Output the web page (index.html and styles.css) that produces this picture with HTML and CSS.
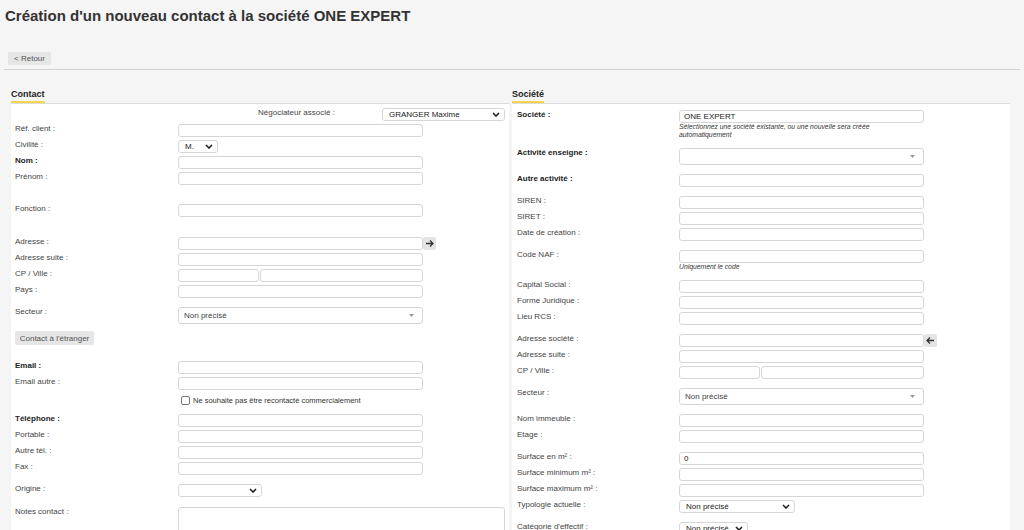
FILE: index.html
```html
<!DOCTYPE html>
<html lang="fr">
<head>
    <meta charset="UTF-8">
    <meta name="viewport" content="width=device-width, initial-scale=1.0">
    <title>Nouveau contact</title>
    <link rel="stylesheet" href="styles.css">
</head>
<body>
    <h1 class="page-title">Création d'un nouveau contact à la société ONE EXPERT</h1>
    <div class="toolbar">
        <button class="btn btn-back">&lt; Retour</button>
    </div>

    <div class="columns">
        <!-- Contact -->
        <div class="column">
            <h2 class="section-title"><span>Contact</span></h2>
            <div class="panel">
                <div class="row">
                    <div class="nego-label">Négociateur associé :</div>
                    <div class="select-wrap w-nego">
                        <select><option>GRANGER Maxime</option></select>
                        <svg class="chevron" width="8" height="5" viewBox="0 0 8 5"><path d="M1 1 L4 4 L7 1" /></svg>
                    </div>
                </div>
                <div class="row">
                    <label class="label">Réf. client :</label>
                    <input type="text" class="input">
                </div>
                <div class="row">
                    <label class="label">Civilité :</label>
                    <div class="select-wrap w-civ">
                        <select><option>M.</option></select>
                        <svg class="chevron" width="8" height="5" viewBox="0 0 8 5"><path d="M1 1 L4 4 L7 1" /></svg>
                    </div>
                </div>
                <div class="row">
                    <label class="label strong">Nom :</label>
                    <input type="text" class="input">
                </div>
                <div class="row">
                    <label class="label">Prénom :</label>
                    <input type="text" class="input">
                </div>
                <div class="row sep-lg">
                    <label class="label">Fonction :</label>
                    <input type="text" class="input">
                </div>
                <div class="row sep-xl">
                    <label class="label">Adresse :</label>
                    <input type="text" class="input">
                    <button class="addr-btn">
                        <svg width="9" height="9" viewBox="0 0 9 9"><path d="M1 4.5 H8 M5 1.5 L8 4.5 L5 7.5" /></svg>
                    </button>
                </div>
                <div class="row">
                    <label class="label">Adresse suite :</label>
                    <input type="text" class="input">
                </div>
                <div class="row">
                    <label class="label">CP / Ville :</label>
                    <div class="cp-ville">
                        <input type="text" class="input input-cp">
                        <input type="text" class="input input-ville">
                    </div>
                </div>
                <div class="row">
                    <label class="label">Pays :</label>
                    <input type="text" class="input">
                </div>
                <div class="row sep">
                    <label class="label">Secteur :</label>
                    <div class="select2">
                        <span>Non précisé</span>
                        <svg width="5" height="3" viewBox="0 0 5 3"><polygon points="0,0 5,0 2.5,3" /></svg>
                    </div>
                </div>
                <div class="row">
                    <button class="btn btn-foreign">Contact à l'étranger</button>
                </div>
                <div class="row sep-md">
                    <label class="label strong">Email :</label>
                    <input type="text" class="input">
                </div>
                <div class="row">
                    <label class="label">Email autre :</label>
                    <input type="text" class="input">
                </div>
                <div class="check-row">
                    <span class="checkbox"></span>
                    <span>Ne souhaite pas être recontacté commercialement</span>
                </div>
                <div class="row">
                    <label class="label strong">Téléphone :</label>
                    <input type="text" class="input">
                </div>
                <div class="row">
                    <label class="label">Portable :</label>
                    <input type="text" class="input">
                </div>
                <div class="row">
                    <label class="label">Autre tél. :</label>
                    <input type="text" class="input">
                </div>
                <div class="row">
                    <label class="label">Fax :</label>
                    <input type="text" class="input">
                </div>
                <div class="row sep">
                    <label class="label">Origine :</label>
                    <div class="select-wrap w-origine">
                        <select><option></option></select>
                        <svg class="chevron" width="8" height="5" viewBox="0 0 8 5"><path d="M1 1 L4 4 L7 1" /></svg>
                    </div>
                </div>
                <div class="row sep-notes">
                    <label class="label">Notes contact :</label>
                    <textarea class="notes"></textarea>
                </div>
            </div>
        </div>

        <!-- Société -->
        <div class="column">
            <h2 class="section-title"><span>Société</span></h2>
            <div class="panel panel-societe">
                <div class="row">
                    <label class="label strong">Société :</label>
                    <div class="field">
                        <input type="text" class="input" value="ONE EXPERT">
                        <div class="help">Sélectionnez une société existante, ou une nouvelle sera créée automatiquement</div>
                    </div>
                </div>
                <div class="row sep">
                    <label class="label strong">Activité enseigne :</label>
                    <div class="select2">
                        <span></span>
                        <svg width="5" height="3" viewBox="0 0 5 3"><polygon points="0,0 5,0 2.5,3" /></svg>
                    </div>
                </div>
                <div class="row sep">
                    <label class="label strong">Autre activité :</label>
                    <input type="text" class="input">
                </div>
                <div class="row sep">
                    <label class="label">SIREN :</label>
                    <input type="text" class="input">
                </div>
                <div class="row">
                    <label class="label">SIRET :</label>
                    <input type="text" class="input">
                </div>
                <div class="row">
                    <label class="label">Date de création :</label>
                    <input type="text" class="input">
                </div>
                <div class="row sep">
                    <label class="label">Code NAF :</label>
                    <div class="field">
                        <input type="text" class="input">
                        <div class="help">Uniquement le code</div>
                    </div>
                </div>
                <div class="row sep">
                    <label class="label">Capital Social :</label>
                    <input type="text" class="input">
                </div>
                <div class="row">
                    <label class="label">Forme Juridique :</label>
                    <input type="text" class="input">
                </div>
                <div class="row">
                    <label class="label">Lieu RCS :</label>
                    <input type="text" class="input">
                </div>
                <div class="row sep">
                    <label class="label">Adresse société :</label>
                    <input type="text" class="input">
                    <button class="addr-btn">
                        <svg width="9" height="9" viewBox="0 0 9 9"><path d="M8 4.5 H1 M4 1.5 L1 4.5 L4 7.5" /></svg>
                    </button>
                </div>
                <div class="row">
                    <label class="label">Adresse suite :</label>
                    <input type="text" class="input">
                </div>
                <div class="row">
                    <label class="label">CP / Ville :</label>
                    <div class="cp-ville">
                        <input type="text" class="input input-cp">
                        <input type="text" class="input input-ville">
                    </div>
                </div>
                <div class="row sep">
                    <label class="label">Secteur :</label>
                    <div class="select2">
                        <span>Non précisé</span>
                        <svg width="5" height="3" viewBox="0 0 5 3"><polygon points="0,0 5,0 2.5,3" /></svg>
                    </div>
                </div>
                <div class="row sep">
                    <label class="label">Nom immeuble :</label>
                    <input type="text" class="input">
                </div>
                <div class="row">
                    <label class="label">Etage :</label>
                    <input type="text" class="input">
                </div>
                <div class="row sep">
                    <label class="label">Surface en m² :</label>
                    <input type="text" class="input" value="0">
                </div>
                <div class="row">
                    <label class="label">Surface minimum m² :</label>
                    <input type="text" class="input">
                </div>
                <div class="row">
                    <label class="label">Surface maximum m² :</label>
                    <input type="text" class="input">
                </div>
                <div class="row">
                    <label class="label">Typologie actuelle :</label>
                    <div class="select-wrap w-typo">
                        <select><option>Non précisé</option></select>
                        <svg class="chevron" width="8" height="5" viewBox="0 0 8 5"><path d="M1 1 L4 4 L7 1" /></svg>
                    </div>
                </div>
                <div class="row sep">
                    <label class="label">Catégorie d'effectif :</label>
                    <div class="select-wrap w-effectif">
                        <select><option>Non précisé</option></select>
                        <svg class="chevron" width="8" height="5" viewBox="0 0 8 5"><path d="M1 1 L4 4 L7 1" /></svg>
                    </div>
                </div>
            </div>
        </div>
    </div>
</body>
</html>
```

FILE: styles.css
```css
body {
    font-family: 'Liberation Sans', Arial, sans-serif;
    background-color: #f5f5f5;
    color: #444;
    margin: 0;
    padding: 0 4px;
    font-size: 8px;
    overflow: hidden;
}

.page-title {
    font-size: 15px;
    line-height: 17px;
    font-weight: bold;
    color: #333;
    margin: 7px 0 0 1px;
}

.toolbar {
    margin-top: 28px;
    padding: 0 0 4px 4px;
    border-bottom: 1px solid #d2d2d2;
}

.btn {
    font-family: inherit;
    font-size: 8px;
    color: #555;
    background-color: #e6e6e6;
    border: none;
    border-radius: 2px;
    padding: 0;
    cursor: pointer;
}

.btn-back {
    width: 43px;
    height: 13px;
    display: block;
}

.columns {
    display: flex;
    gap: 3px;
    padding-left: 7px;
    margin-top: 19px;
}

.column {
    width: 498px;
}

.section-title {
    font-size: 9px;
    line-height: 10px;
    font-weight: bold;
    color: #222;
    margin: 0;
    height: 14px;
}

.section-title span {
    display: inline-block;
    padding-bottom: 2px;
    border-bottom: 2px solid #f3d54e;
}

.panel {
    background-color: #fff;
    border-top: 1px solid #dcdcdc;
    padding: 4px 4px 40px;
    height: 500px;
}

.panel-societe {
    padding-top: 6px;
    padding-left: 5px;
}

/* margins collapse between rows: the values below are the full gap */
.row {
    display: flex;
    align-items: flex-start;
    margin-bottom: 3px;
}

.sep {
    margin-top: 9px;
}

.sep-notes {
    margin-top: 10px;
}

.sep-md {
    margin-top: 16px;
}

.sep-lg {
    margin-top: 19px;
}

.sep-xl {
    margin-top: 20px;
}

.label {
    width: 163px;
    flex-shrink: 0;
    line-height: 10px;
    color: #444;
}

.panel-societe .label {
    width: 162px;
}

.label.strong {
    font-weight: bold;
    color: #222;
}

.nego-label {
    width: 367px;
    padding-left: 243px;
    box-sizing: border-box;
    line-height: 10px;
    color: #444;
}

.input {
    width: 245px;
    height: 13px;
    box-sizing: border-box;
    border: 1px solid #d6d6d6;
    border-radius: 3px;
    padding: 0 4px;
    margin: 0;
    font-family: inherit;
    font-size: 8px;
    color: #222;
    background-color: #fff;
    outline: none;
}

.field .help {
    width: 225px;
    font-size: 6.8px;
    line-height: 8px;
    font-style: italic;
    color: #333;
}

.cp-ville {
    display: flex;
    gap: 1px;
}

.input-cp {
    width: 81px;
}

.input-ville {
    width: 163px;
}

.addr-btn {
    width: 13px;
    height: 13px;
    padding: 0;
    border: none;
    border-radius: 2px;
    background-color: #e4e4e4;
    display: flex;
    align-items: center;
    justify-content: center;
}

.addr-btn path {
    fill: none;
    stroke: #333;
    stroke-width: 1.3;
}

.select-wrap {
    position: relative;
    height: 13px;
}

.select-wrap select {
    appearance: none;
    width: 100%;
    height: 13px;
    box-sizing: border-box;
    border: 1px solid #d6d6d6;
    border-radius: 3px;
    background-color: #fff;
    padding: 0 6px;
    margin: 0;
    font-family: inherit;
    font-size: 8px;
    color: #222;
    outline: none;
}

.select-wrap .chevron {
    position: absolute;
    right: 5px;
    top: 4px;
}

.chevron path {
    fill: none;
    stroke: #222;
    stroke-width: 1.6;
}

.w-nego { width: 123px; }
.w-civ { width: 40px; }
.w-origine { width: 84px; }
.w-typo { width: 116px; }
.w-effectif { width: 69px; }

.select2 {
    width: 245px;
    height: 17px;
    box-sizing: border-box;
    border: 1px solid #d6d6d6;
    border-radius: 3px;
    background-color: #fff;
    display: flex;
    align-items: center;
    justify-content: space-between;
    padding: 0 8px 0 5px;
    color: #444;
}

.select2 polygon {
    fill: #999;
}

.btn-foreign {
    width: 79px;
    height: 14px;
    margin-top: 4px;
}

.check-row {
    display: flex;
    align-items: center;
    height: 14px;
    margin: 0 0 7px 166px;
    gap: 3px;
    font-size: 7.5px;
    color: #333;
}

.checkbox {
    width: 9px;
    height: 9px;
    box-sizing: border-box;
    border: 1px solid #777;
    border-radius: 2px;
    background-color: #fff;
}

.notes {
    width: 327px;
    height: 40px;
    box-sizing: border-box;
    border: 1px solid #d6d6d6;
    border-radius: 3px;
    margin: 0;
    resize: none;
}
```
